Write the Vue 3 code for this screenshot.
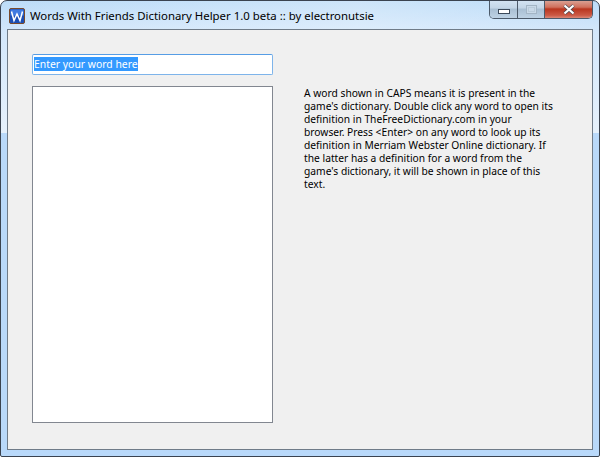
<template>
  <div class="win">
    <header class="titlebar">
      <svg class="appicon" width="16" height="16" viewBox="0 0 16 16">
        <rect x="0.5" y="0.5" width="15" height="15" rx="1.5" fill="#1c4fb4" stroke="#7a4a2a" />
        <rect x="1.5" y="1.5" width="13" height="6" fill="#3f7ae0" />
        <path d="M2.5 3.5 L5 12.5 L8 6 L11 12.5 L13.5 3.5" fill="none" stroke="#fff" stroke-width="1.5" />
      </svg>
      <div class="title">Words With Friends Dictionary Helper 1.0 beta :: by electronutsie</div>
      <div class="controls">
        <div class="ctl min"><span class="minbar"></span></div>
        <div class="ctl max"><span class="maxbox"></span></div>
        <div class="ctl close">
          <svg width="14" height="11" viewBox="0 0 14 11">
            <path d="M2.5 1.5 L11.5 9.5 M11.5 1.5 L2.5 9.5" stroke="#4a4a52" stroke-width="3.6" />
            <path d="M2.5 1.5 L11.5 9.5 M11.5 1.5 L2.5 9.5" stroke="#fff" stroke-width="2.2" />
          </svg>
        </div>
      </div>
    </header>
    <main class="client">
      <div class="left">
        <input class="word" :value="placeholder" ref="wordInput" spellcheck="false" />
        <div class="list"></div>
      </div>
      <p class="help">{{ help }}</p>
    </main>
  </div>
</template>

<script setup>
import { onMounted, ref } from 'vue'

const placeholder = 'Enter your word here'
// same breaks as the native label
const help = [
  'A word shown in CAPS means it is present in the',
  "game's dictionary. Double click any word to open its",
  'definition in TheFreeDictionary.com in your',
  'browser. Press <Enter> on any word to look up its',
  'definition in Merriam Webster Online dictionary. If',
  'the latter has a definition for a word from the',
  "game's dictionary, it will be shown in place of this",
  'text.',
].join('\n')

const wordInput = ref(null)

onMounted(() => {
  wordInput.value.focus()
  wordInput.value.select()
})
</script>

<style>
html, body {
  margin: 0;
  background: #fff;
}
</style>

<style scoped>
.win {
  box-sizing: border-box;
  width: 600px;
  height: 457px;
  display: flex;
  flex-direction: column;
  border: 1px solid #3a4350;
  border-radius: 7px 7px 2px 2px;
  background: linear-gradient(180deg, #bcdcf8 0, #d3e7fb 30px, #e6f1fc 132px, #b9d9fa 132px, #b9d9fa 100%);
  padding: 0 6px 6px;
  overflow: hidden;
  font-family: "Noto Sans", sans-serif;
}
.titlebar {
  height: 28px;
  flex: none;
  display: flex;
  align-items: flex-start;
  background: linear-gradient(100deg, rgba(255,255,255,0) 0, rgba(255,255,255,0.25) 60%, rgba(255,255,255,0) 100%);
}
.appicon {
  margin: 7px 0 0 2px;
  flex: none;
}
.title {
  margin: 6px 0 0 5px;
  font-size: 11.4px;
  line-height: 17px;
  color: #000;
  white-space: nowrap;
  flex: 1;
}
.controls {
  display: flex;
  height: 19px;
  margin-top: -1px;
  box-sizing: border-box;
  border: 1px solid #4c5a6a;
  border-top: none;
  border-radius: 0 0 5px 5px;
  overflow: hidden;
  flex: none;
}
.ctl {
  height: 18px;
  display: flex;
  align-items: center;
  justify-content: center;
}
.min {
  width: 27px;
  background: linear-gradient(180deg, #d4e4f3 0, #c3d5e6 45%, #a9bfd3 50%, #bed2e4 100%);
  border-right: 1px solid #4c5a6a;
}
.minbar {
  width: 10px;
  height: 3px;
  margin-top: 5px;
  background: #fff;
  border: 1px solid #3c4a5a;
}
.max {
  width: 26px;
  background: linear-gradient(180deg, #d4e4f3 0, #c3d5e6 45%, #a9bfd3 50%, #bed2e4 100%);
  border-right: 1px solid #4c5a6a;
}
.maxbox {
  width: 9px;
  height: 7px;
  border: 1px solid #a3b5c5;
  outline: 1px solid #b9cbda;
  outline-offset: -3px;
  background: #c9d9e8;
}
.close {
  width: 47px;
  background: linear-gradient(180deg, #dba79a 0, #d0705c 40%, #b9361f 50%, #cc5a45 85%, #dc8877 100%);
}
.client {
  flex: 1;
  min-height: 0;
  display: flex;
  align-items: flex-start;
  background: #f0f0f0;
  border: 1px solid #6f7b88;
  padding: 24px 0 26px 24px;
}
.left {
  width: 241px;
  height: 100%;
  flex: none;
  display: flex;
  flex-direction: column;
  gap: 11px;
}
.word {
  box-sizing: border-box;
  width: 100%;
  height: 21px;
  flex: none;
  margin: 0;
  padding: 0 1px 1px;
  border: 1px solid #7eb4ea;
  border-top-color: #569de5;
  border-radius: 2px;
  outline: none;
  background: #fff;
  color: #000;
  font: 10.4px/18px "Noto Sans", sans-serif;
}
.word::selection {
  background: #3399ff;
  color: #fff;
}
.list {
  flex: 1;
  background: #fff;
  border: 1px solid #828790;
}
.help {
  width: 252px;
  margin: 33px 0 0 31px;
  font-size: 10.25px;
  line-height: 13px;
  color: #000;
  white-space: pre-line;
}
</style>
